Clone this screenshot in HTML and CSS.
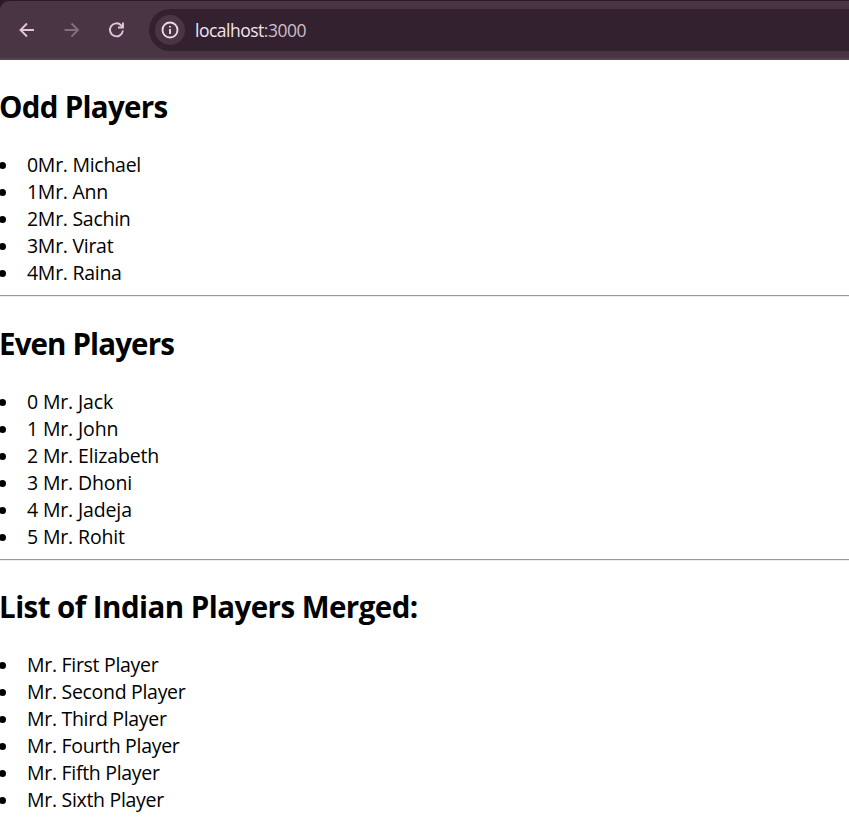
FILE: index.html
```html
<!DOCTYPE html>
<html lang="en">
<head>
<meta charset="utf-8">
<title>Players</title>
<link rel="stylesheet" href="styles.css">
</head>
<body>
<header class="browser">
 <div class="toolbar">
  <svg class="icon" viewBox="0 0 20 20"><path d="M17 10H4M10 3.500L3.500 10L10 16.500"/></svg>
  <svg class="icon dim" viewBox="0 0 20 20"><path d="M2.500 10H15.500M9.500 3.500L16 10L9.500 16.500"/></svg>
  <svg class="icon" viewBox="0 0 20 20"><path d="M15.900 10.500A6.500 6.500 0 1 1 14.200 5.400L16 7.300M16 2.500V7.500H11"/></svg>
  <div class="address">
    <span class="info"><svg class="icon" viewBox="0 0 20 20"><circle cx="10" cy="10" r="7.500"/><path d="M10 9V14M10 6V7.600"/></svg></span>
    <span class="url">localhost<span class="port">:3000</span></span>
  </div>
 </div>
</header>
<main>
  <h1>Odd Players</h1>
  <ul>
    <li>0Mr. Michael</li><li>1Mr. Ann</li><li>2Mr. Sachin</li><li>3Mr. Virat</li><li>4Mr. Raina</li>
  </ul>
  <hr>
  <h1 class="even-title">Even Players</h1>
  <ul class="even">
    <li>0 Mr. Jack</li><li>1 Mr. John</li><li>2 Mr. Elizabeth</li><li>3 Mr. Dhoni</li><li>4 Mr. Jadeja</li><li>5 Mr. Rohit</li>
  </ul>
  <hr>
  <h1 class="merged-title">List of Indian Players Merged:</h1>
  <ul class="merged">
    <li>Mr. First Player</li><li>Mr. Second Player</li><li>Mr. Third Player</li><li>Mr. Fourth Player</li><li>Mr. Fifth Player</li><li>Mr. Sixth Player</li>
  </ul>
</main>
</body>
</html>
```
FILE: styles.css
```css
* { box-sizing: border-box; }
body { margin: 0; background: #fff; color: #000; font: 19.5px/25px "Segoe UI", "Open Sans", "Noto Sans", sans-serif; overflow: hidden; }
.browser { height: 60px; padding-top: 1px; background: #2b1a28; }
.toolbar { display: flex; align-items: center; height: 59px; padding: 0 0 0 17px; gap: 25px; background: #4a3545; border-bottom: 2px solid #54444f; border-top-left-radius: 9px; }
.icon { flex: none; width: 20px; height: 20px; fill: none; stroke: #e2c5da; stroke-width: 1.9; }
.dim { stroke: #836f7c; }
.address { flex: 1; display: flex; align-items: center; height: 42px; margin-left: -3px; padding-left: 6px; gap: 10px; border-radius: 21px 0 0 21px; background: #33212f; }
.info { display: flex; align-items: center; justify-content: center; width: 30px; height: 30px; border-radius: 50%; background: #4a3545; }
.info .icon { stroke: #ead9e4; }
.url { padding-top: 1px; font-size: 17.5px; letter-spacing: -0.5px; color: #f1e5ec; }
.port { color: #cdbfc9; }
h1 { margin: 0 0 0 -1px; padding: 27px 0 25px; font-size: 29.5px; line-height: 40px; font-weight: 700; letter-spacing: -0.7px; white-space: nowrap; }
ul { margin: 0; padding: 0; list-style: none; letter-spacing: -0.28px; }
.even { letter-spacing: -0.15px; }
.merged { letter-spacing: -0.3px; }
.even-title { letter-spacing: -0.87px; }
.merged-title { padding-top: 26px; letter-spacing: -0.54px; }
li { display: flex; align-items: center; height: 27px; padding-bottom: 3px; }
li::before { content: ""; width: 7px; height: 7px; margin: 3px 21px 0 -1px; border-radius: 50%; background: #000; }
hr { height: 2px; margin: 8px 0 0; border: 0; border-top: 1px solid #9a9a9a; background: #eee; }
```
